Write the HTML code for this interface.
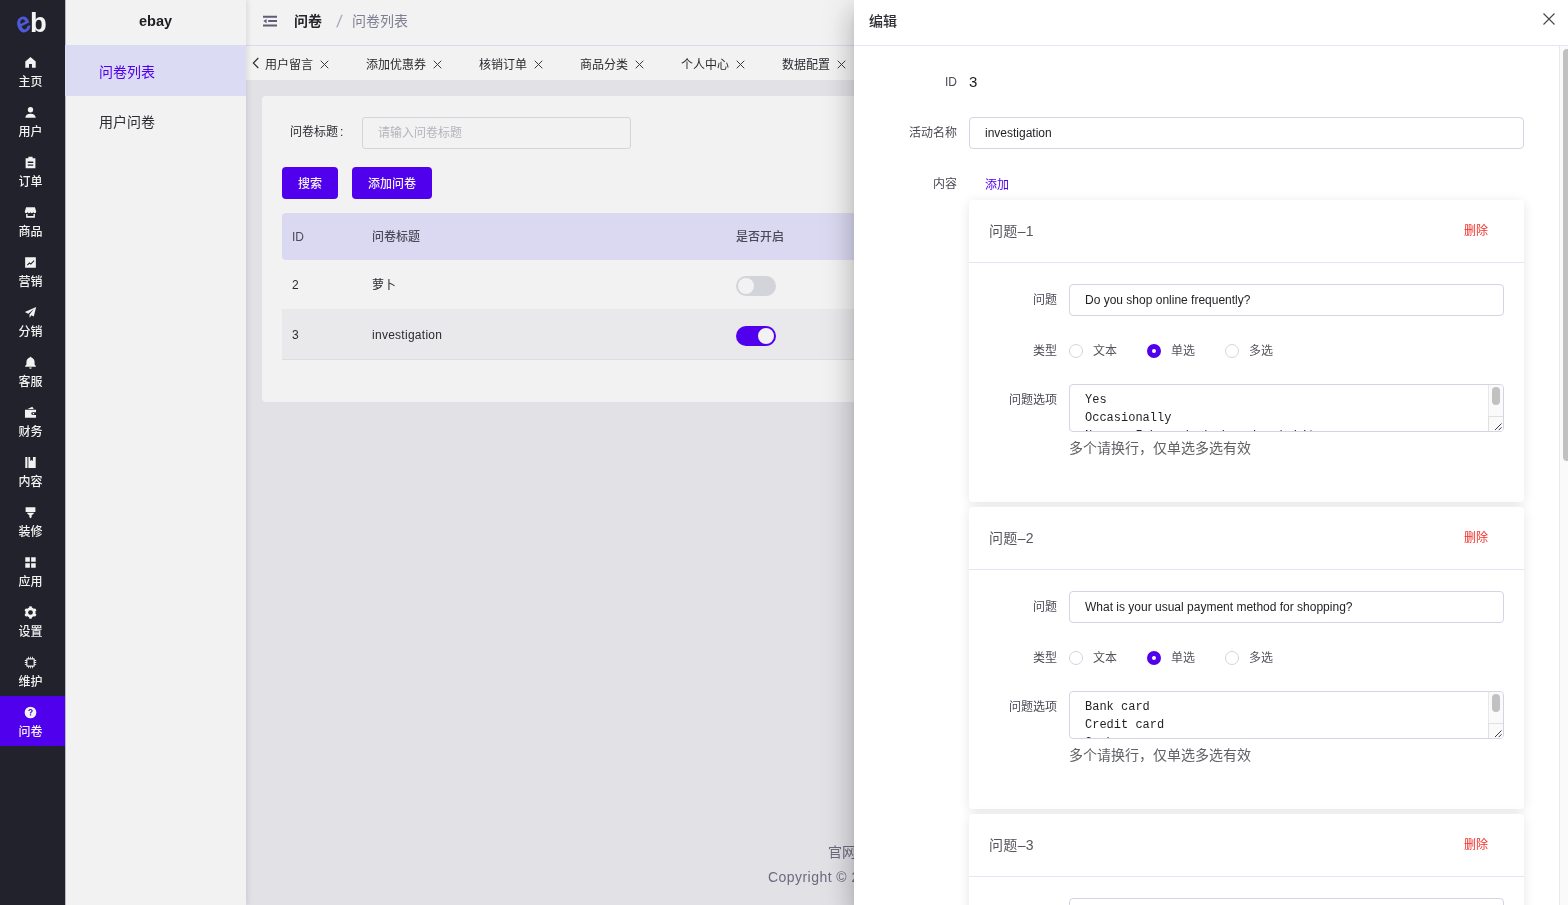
<!DOCTYPE html>
<html lang="zh-CN">
<head>
<meta charset="utf-8">
<title>问卷列表</title>
<style>
*{box-sizing:border-box;margin:0;padding:0}
html,body{width:1568px;height:905px;overflow:hidden}
body{position:relative;font-family:"Liberation Sans","Noto Sans CJK SC",sans-serif;font-size:14px;color:#303133;background:#e2e1e6}
.abs{position:absolute}
body>*{will-change:transform}
/* dark sidebar */
#nav{position:absolute;left:0;top:0;width:65px;height:905px;background:#22222c}
#nav .it{position:absolute;left:0;width:65px;height:50px;color:#f2f2f2;text-align:center}
#nav .it svg{position:absolute;left:24px;top:10px;width:13px;height:13px;fill:#f2f2f2}
#nav .it span{position:absolute;left:0;width:61px;top:27px;font-size:12px;line-height:18px;text-align:center;font-weight:500}
#nav .it.on{background:#5100ee}
#nav .logo{position:absolute;left:0;top:0;width:65px;height:46px}
/* sub menu */
#sub{position:absolute;left:65px;top:0;width:181px;height:905px;background:#f2f2f2;z-index:1;box-shadow:inset 1px 0 0 #b9b9c6,2px 0 5px rgba(0,10,40,.09)}
#sub .ttl{position:absolute;left:0;top:0;width:181px;height:45px;line-height:42px;text-align:center;font-size:14.500px;color:#1d1d22;font-weight:bold}
#sub .mi{position:absolute;left:0;width:181px;height:51px;line-height:52px;padding-left:34px;font-size:14px;color:#2c2c33}
#sub .mi.on{background:#dbdbf3;color:#5100ee;line-height:54px}
/* main */
#hdr{position:absolute;left:246px;top:0;width:700px;height:46px;background:#f2f2f2;border-bottom:1px solid #dcdbee}
#tabs{position:absolute;left:246px;top:46px;width:700px;height:34px;background:#f2f2f2}
#tabs .tb{position:absolute;top:0;height:34px;line-height:38px;font-size:12px;color:#2a2a30;white-space:nowrap}
#card{position:absolute;left:262px;top:96px;width:700px;height:306px;background:#f2f2f2;border-radius:4px}
.btn{position:absolute;height:32px;line-height:34px;background:#5100ee;color:#f2f2f2;font-size:12px;text-align:center;border-radius:4px;font-weight:500}
.th{position:absolute;top:132px;font-size:12px;line-height:18px;font-weight:500;color:#4a4a58;white-space:nowrap}
.td{position:absolute;font-size:12px;line-height:18px;color:#2a2a30;white-space:nowrap}
.sw{position:absolute;width:40px;height:20px;border-radius:10px}
.sw i{position:absolute;top:2px;width:16px;height:16px;border-radius:8px;background:#f2f2f2}
/* drawer */
#drawer{position:absolute;left:854px;top:0;width:714px;height:905px;background:#fff;box-shadow:0 8px 10px -5px rgba(0,0,0,.2),0 16px 24px 2px rgba(0,0,0,.14),0 6px 30px 5px rgba(0,0,0,.12);overflow:hidden}
.dh{position:absolute;left:0;top:0;width:714px;height:46px;border-bottom:1px solid #e6e6f4;background:#fff;z-index:3}
.lb{position:absolute;left:0;width:103px;text-align:right;font-size:12px;line-height:20px;color:#4a4a55;white-space:nowrap}
.inp{position:absolute;height:32px;border:1px solid #d4d4e3;border-radius:4px;background:#fff;font-size:12px;line-height:30px;padding-left:15px;color:#1f1f24;white-space:nowrap;overflow:hidden}
.qc{position:absolute;left:115px;width:555px;height:301.500px;background:#fff;border-radius:4px;box-shadow:0 2px 12px rgba(0,0,0,.1)}
.qt{position:absolute;left:20px;top:21px;font-size:14px;line-height:20px;color:#55555e;letter-spacing:.35px}
.qd{position:absolute;left:495px;top:21px;font-size:12px;line-height:20px;color:#f0302a}
.qh{position:absolute;left:0;top:62px;width:555px;height:1px;background:#e4e5f9}
.lb2{position:absolute;left:0;width:88px;text-align:right;font-size:12px;line-height:20px;color:#4a4a55;white-space:nowrap}
.rd{position:absolute;top:144px;width:14px;height:14px;border-radius:7px;border:1px solid #d4d4e3;background:#fff}
.rd.on{border:5px solid #5100ee}
.rl{position:absolute;top:141px;font-size:12px;line-height:20px;color:#55555e;white-space:nowrap}
.ta{position:absolute;left:100px;top:184px;width:435px;height:48px;border:1px solid #d4d4e3;border-radius:4px;background:#fff;overflow:hidden}
.ta pre{position:absolute;left:15px;top:6px;font-family:"Liberation Mono","Noto Sans CJK SC",monospace;font-size:12px;line-height:18px;color:#1f1f24}
.tsb{position:absolute;right:0;top:0;width:15px;height:46px;background:#fafafa;border-left:1px solid #e8e8e8}
.tsb b{position:absolute;left:3px;top:2px;width:8px;height:18px;border-radius:4px;background:#c1c1c1}
.tsb u{position:absolute;left:-1px;top:31px;width:15px;height:15px;border-left:1px solid #e0e0e0;border-top:1px solid #e0e0e0;background:#fafafa}
.tsb u svg{position:absolute;left:1px;top:1px}
.hp{position:absolute;left:100px;top:238px;font-size:14px;line-height:20px;color:#606266;white-space:nowrap}
.sbar{position:absolute;left:705px;top:46px;width:9px;height:859px;background:#fafafa;border-left:1px solid #e8e8e8;z-index:2}
.sbar b{position:absolute;left:3px;top:3px;width:8px;height:412px;border-radius:4px;background:#c1c1c1}
</style>
</head>
<body>
<div id="nav">
<div class="logo"><svg viewBox="0 0 65 46" width="65" height="46"><text x="0" y="0" font-family="Liberation Sans" font-weight="bold" font-size="29" fill="#4f59d8" transform="translate(16.300 32.300) scale(.88 1) rotate(-24 8 -8)">e</text><text x="0" y="0" font-family="Liberation Sans" font-weight="bold" font-size="27.500" fill="#f4f4f4" transform="translate(29.900 32.200)">b</text></svg></div>
<div class="it" style="top:46px"><svg viewBox="0 0 16 16"><path d="M8 1.2 1.6 6.8V14.4h4.6V9.8h3.6v4.6h4.6V6.8z"/></svg><span>主页</span></div>
<div class="it" style="top:96px"><svg viewBox="0 0 16 16"><circle cx="8" cy="4.6" r="3.3"/><path d="M1.6 14.6c0-3.4 2.6-5.2 6.4-5.2s6.4 1.8 6.4 5.2z"/></svg><span>用户</span></div>
<div class="it" style="top:146px"><svg viewBox="0 0 16 16"><path fill-rule="evenodd" d="M5.400 1h5.200v1.800H14v12.400H2V2.800h3.400zM4.600 6.800h6.800v1.700H4.600zm0 3.600h6.800v1.700H4.600z"/></svg><span>订单</span></div>
<div class="it" style="top:196px"><svg viewBox="0 0 16 16"><path d="M2.6 1.6h10.8l1.6 5.2c0 1.2-.8 2-1.800 2s-1.800-.8-1.800-2c0 1.200-.8 2-1.800 2S8 8 8 6.800c0 1.200-.8 2-1.800 2s-1.800-.8-1.800-2c0 1.200-.8 2-1.800 2S1 8 1 6.800z"/><path d="M2.600 9.8h1.800v2.600h7.200V9.800h1.800v4.800H2.600z"/></svg><span>商品</span></div>
<div class="it" style="top:246px"><svg viewBox="0 0 16 16"><path fill-rule="evenodd" d="M1.400 1.400h13.200v13.200H1.400zM3.600 10.800l3-3.200 1.800 1.400 3.600-3.800.9.900-4.400 4.700-1.800-1.400-2.200 2.400z"/></svg><span>营销</span></div>
<div class="it" style="top:296px"><svg viewBox="0 0 16 16"><path d="M15 1.200 1 7.400l4.200 2.200 7-5.800-5.400 6.600v4l2.400-2.900 2.800 1.500z"/></svg><span>分销</span></div>
<div class="it" style="top:346px"><svg viewBox="0 0 16 16"><path d="M8 1c-.7 0-1.200.5-1.200 1.100C4.500 2.700 3 4.700 3 7.200v3.400L1.400 12.400v.9h13.200v-.9L13 10.600V7.200c0-2.500-1.500-4.500-3.800-5.100C9.200 1.500 8.700 1 8 1zM6.400 14.100a1.600 1.600 0 0 0 3.200 0z"/></svg><span>客服</span></div>
<div class="it" style="top:396px"><svg viewBox="0 0 16 16"><path fill-rule="evenodd" d="M10.200 1 12 3.800H4.400zM1.200 4.600h13.600v3h-4.200a1.700 1.700 0 0 0 0 3.400h4.200v3.400H1.200zm9.600 4h1.600v1.400h-1.600z"/></svg><span>财务</span></div>
<div class="it" style="top:446px"><svg viewBox="0 0 16 16"><path d="M1.600 1.200h2.600v13.600H1.600zM5.400 1.200h2.200v5l1.700-1.300L11 6.200v-5h3.400v13.600h-9z"/></svg><span>内容</span></div>
<div class="it" style="top:496px"><svg viewBox="0 0 16 16"><path d="M2 1.400h12v6H2zM4 8.400h8v1.200l-2.600 1.800v2.400L8 15l-1.400-1.200v-2.400L4 9.600z"/></svg><span>装修</span></div>
<div class="it" style="top:546px"><svg viewBox="0 0 16 16"><path d="M1.600 1.600h5.600v5.600H1.600zM8.800 1.600h5.600v5.600H8.800zM1.600 8.800h5.600v5.600H1.600zM8.800 8.800h5.600v5.600H8.800z"/></svg><span>应用</span></div>
<div class="it" style="top:596px"><svg viewBox="0 0 16 16"><circle cx="8" cy="8" r="6.200"/><rect x="6.300" y="0.300" width="3.400" height="15.400" rx="1" transform="rotate(0 8 8)"/><rect x="6.300" y="0.300" width="3.400" height="15.400" rx="1" transform="rotate(60 8 8)"/><rect x="6.300" y="0.300" width="3.400" height="15.400" rx="1" transform="rotate(120 8 8)"/><circle cx="8" cy="8" r="2.900" fill="#22222c"/></svg><span>设置</span></div>
<div class="it" style="top:646px"><svg viewBox="0 0 16 16"><path fill-rule="evenodd" d="M5 1h1v1.800h1.500V1h1v1.800H10V1h1v1.800h1.200c.6 0 1 .4 1 1V5H15v1h-1.800v1.500H15v1h-1.800V10H15v1h-1.800v1.200c0 .6-.4 1-1 1H11V15h-1v-1.800H8.500V15h-1v-1.800H6V15H5v-1.800H3.800c-.6 0-1-.4-1-1V11H1v-1h1.800V8.500H1v-1h1.800V6H1V5h1.800V3.800c0-.6.4-1 1-1H5zM4.200 4.200v7.600h7.600V4.200z"/></svg><span>维护</span></div>
<div class="it on" style="top:696px"><svg viewBox="0 0 16 16"><path fill-rule="evenodd" d="M8 .8a7.200 7.200 0 1 0 0 14.400A7.200 7.200 0 0 0 8 .800zM5.400 6.200c0-1.500 1.100-2.600 2.700-2.600 1.500 0 2.600 1 2.600 2.300 0 1-.5 1.600-1.300 2.100-.6.400-.7.600-.7 1.200H7.300c0-1 .3-1.500 1-2 .600-.4.900-.7.900-1.200 0-.6-.5-1-1.100-1-.7 0-1.200.5-1.200 1.200zm1.800 4h1.600v1.600H7.200z"/></svg><span>问卷</span></div>
</div>
<div id="sub">
  <div class="ttl">ebay</div>
  <div class="mi on" style="top:45px">问卷列表</div>
  <div class="mi" style="top:96px">用户问卷</div>
</div>
<div id="hdr">
  <svg class="abs" style="left:17px;top:15px" width="14" height="12" viewBox="0 0 14 12"><path d="M0 .7h14v2H0zM5.200 5.100H14v2H5.200zM0 9.500h14v2H0zM3.600 3.900v4.400L.3 6.100z" fill="#5e5c76"/></svg>
  <span class="abs" style="left:48px;top:11px;font-size:14px;line-height:20px;font-weight:bold;color:#26262b">问卷</span>
  <span class="abs" style="left:90.500px;top:12px;font-size:17px;line-height:20px;color:#a6a6b8;transform:skewX(-8deg)">/</span>
  <span class="abs" style="left:106px;top:11px;font-size:14px;line-height:20px;color:#7f7f94">问卷列表</span>
</div>
<div id="tabs">
<svg class="abs" style="left:6px;top:11px" width="8" height="12" viewBox="0 0 8 12"><path d="M6.300 1 1.300 6l5 5" fill="none" stroke="#2a2a30" stroke-width="1.100"/></svg>
<span class="tb" style="left:19px">用户留言</span><svg class="abs" style="left:74px;top:13.500px" width="9" height="9" viewBox="0 0 9 9"><path d="M.7.7l7.600 7.600M8.300.7.700 8.300" stroke="#3a3a40" stroke-width="1" fill="none"/></svg>
<span class="tb" style="left:120px">添加优惠券</span><svg class="abs" style="left:187px;top:13.500px" width="9" height="9" viewBox="0 0 9 9"><path d="M.7.7l7.600 7.600M8.300.7.700 8.300" stroke="#3a3a40" stroke-width="1" fill="none"/></svg>
<span class="tb" style="left:233px">核销订单</span><svg class="abs" style="left:288px;top:13.500px" width="9" height="9" viewBox="0 0 9 9"><path d="M.7.7l7.600 7.600M8.300.7.700 8.300" stroke="#3a3a40" stroke-width="1" fill="none"/></svg>
<span class="tb" style="left:334px">商品分类</span><svg class="abs" style="left:389px;top:13.500px" width="9" height="9" viewBox="0 0 9 9"><path d="M.7.7l7.600 7.600M8.300.7.700 8.300" stroke="#3a3a40" stroke-width="1" fill="none"/></svg>
<span class="tb" style="left:435px">个人中心</span><svg class="abs" style="left:490px;top:13.500px" width="9" height="9" viewBox="0 0 9 9"><path d="M.7.7l7.600 7.600M8.300.7.700 8.300" stroke="#3a3a40" stroke-width="1" fill="none"/></svg>
<span class="tb" style="left:536px">数据配置</span><svg class="abs" style="left:591px;top:13.500px" width="9" height="9" viewBox="0 0 9 9"><path d="M.7.7l7.600 7.600M8.300.7.700 8.300" stroke="#3a3a40" stroke-width="1" fill="none"/></svg>
</div>
<div id="card">
  <span class="abs" style="left:28px;top:27px;font-size:12px;line-height:18px;color:#2a2a30">问卷标题<span style="margin-left:2px">:</span></span>
  <div class="abs" style="left:100px;top:21px;width:269px;height:32px;border:1px solid #d4d4dc;border-radius:3px;background:#f2f2f2;font-size:12px;line-height:31px;padding-left:15px;color:#b4b4bc">请输入问卷标题</div>
  <div class="btn" style="left:20px;top:71px;width:56px">搜索</div>
  <div class="btn" style="left:90px;top:71px;width:80px">添加问卷</div>
  <div class="abs" style="left:20px;top:117px;width:680px;height:47px;background:#dad9f1;border-radius:4px 0 0 4px"></div>
  <span class="th" style="left:30px">ID</span><span class="th" style="left:110px">问卷标题</span><span class="th" style="left:474px">是否开启</span>
  <div class="abs" style="left:20px;top:213px;width:680px;height:51px;background:#e9e9ec;border-bottom:1px solid #dcdce2"></div>
  <span class="td" style="left:30px;top:180px">2</span><span class="td" style="left:110px;top:180px">萝卜</span>
  <span class="td" style="left:30px;top:230px">3</span><span class="td" style="left:110px;top:230px;letter-spacing:.27px">investigation</span>
  <div class="sw" style="left:474px;top:180px;background:#d3d3da"><i style="left:2px"></i></div>
  <div class="sw" style="left:474px;top:230px;background:#5100ee"><i style="left:22px"></i></div>
</div>
<span class="abs" style="left:828px;top:842px;font-size:14px;line-height:20px;color:#6b6b7e;white-space:nowrap">官网</span>
<span class="abs" style="left:768px;top:867px;font-size:14px;line-height:20px;color:#6b6b7e;white-space:nowrap;letter-spacing:.45px">Copyright © 2024</span>
<div id="drawer">
  <div class="dh"><span class="abs" style="left:15px;top:11px;font-size:14px;line-height:20px;font-weight:500;color:#2b2b30">编辑</span>
  <svg class="abs" style="left:689px;top:13px" width="12" height="12" viewBox="0 0 12 12"><path d="M.5.500l11 11M11.500.5.500 11.500" stroke="#45454d" stroke-width="1.100" fill="none"/></svg></div>
  <span class="lb" style="top:72px">ID</span><span class="abs" style="left:115px;top:72px;font-size:15px;line-height:20px;color:#1a1a1a">3</span>
  <span class="lb" style="top:123px">活动名称</span>
  <div class="inp" style="left:115px;top:117px;width:555px">investigation</div>
  <span class="lb" style="top:174px">内容</span>
  <span class="abs" style="left:131px;top:175px;font-size:12px;line-height:20px;color:#5100ee">添加</span>
<div class="qc" style="top:200px">
  <span class="qt">问题–1</span><span class="qd">删除</span>
  <div class="qh"></div>
  <span class="lb2" style="top:90px">问题</span>
  <div class="inp" style="left:100px;top:84px;width:435px">Do you shop online frequently?</div>
  <span class="lb2" style="top:141px">类型</span>
  <i class="rd" style="left:100px"></i><span class="rl" style="left:124px">文本</span>
  <i class="rd on" style="left:178px"></i><span class="rl" style="left:202px">单选</span>
  <i class="rd" style="left:256px"></i><span class="rl" style="left:280px">多选</span>
  <span class="lb2" style="top:190px">问题选项</span>
  <div class="ta"><pre>Yes
Occasionally
Never, I have bad shopping habits</pre><div class="tsb"><b></b><u><svg width="12" height="12" viewBox="0 0 12 12"><path d="M5 12l6.500-6.500M8.800 12l2.700-2.700" stroke="#3c3c3c" stroke-width="1" fill="none"/></svg></u></div></div>
  <span class="hp">多个请换行，仅单选多选有效</span>
</div>
<div class="qc" style="top:507px">
  <span class="qt">问题–2</span><span class="qd">删除</span>
  <div class="qh"></div>
  <span class="lb2" style="top:90px">问题</span>
  <div class="inp" style="left:100px;top:84px;width:435px">What is your usual payment method for shopping?</div>
  <span class="lb2" style="top:141px">类型</span>
  <i class="rd" style="left:100px"></i><span class="rl" style="left:124px">文本</span>
  <i class="rd on" style="left:178px"></i><span class="rl" style="left:202px">单选</span>
  <i class="rd" style="left:256px"></i><span class="rl" style="left:280px">多选</span>
  <span class="lb2" style="top:190px">问题选项</span>
  <div class="ta"><pre>Bank card
Credit card
Cash</pre><div class="tsb"><b></b><u><svg width="12" height="12" viewBox="0 0 12 12"><path d="M5 12l6.500-6.500M8.800 12l2.700-2.700" stroke="#3c3c3c" stroke-width="1" fill="none"/></svg></u></div></div>
  <span class="hp">多个请换行，仅单选多选有效</span>
</div>
<div class="qc" style="top:814px">
  <span class="qt">问题–3</span><span class="qd">删除</span>
  <div class="qh"></div>
  <span class="lb2" style="top:90px">问题</span>
  <div class="inp" style="left:100px;top:84px;width:435px"></div>
  <span class="lb2" style="top:141px">类型</span>
  <i class="rd" style="left:100px"></i><span class="rl" style="left:124px">文本</span>
  <i class="rd on" style="left:178px"></i><span class="rl" style="left:202px">单选</span>
  <i class="rd" style="left:256px"></i><span class="rl" style="left:280px">多选</span>
  <span class="lb2" style="top:190px">问题选项</span>
  <div class="ta"><pre></pre><div class="tsb"><b></b><u><svg width="12" height="12" viewBox="0 0 12 12"><path d="M5 12l6.500-6.500M8.800 12l2.700-2.700" stroke="#3c3c3c" stroke-width="1" fill="none"/></svg></u></div></div>
  <span class="hp">多个请换行，仅单选多选有效</span>
</div>
  <div class="sbar"><b></b></div>
</div>
</body>
</html>
